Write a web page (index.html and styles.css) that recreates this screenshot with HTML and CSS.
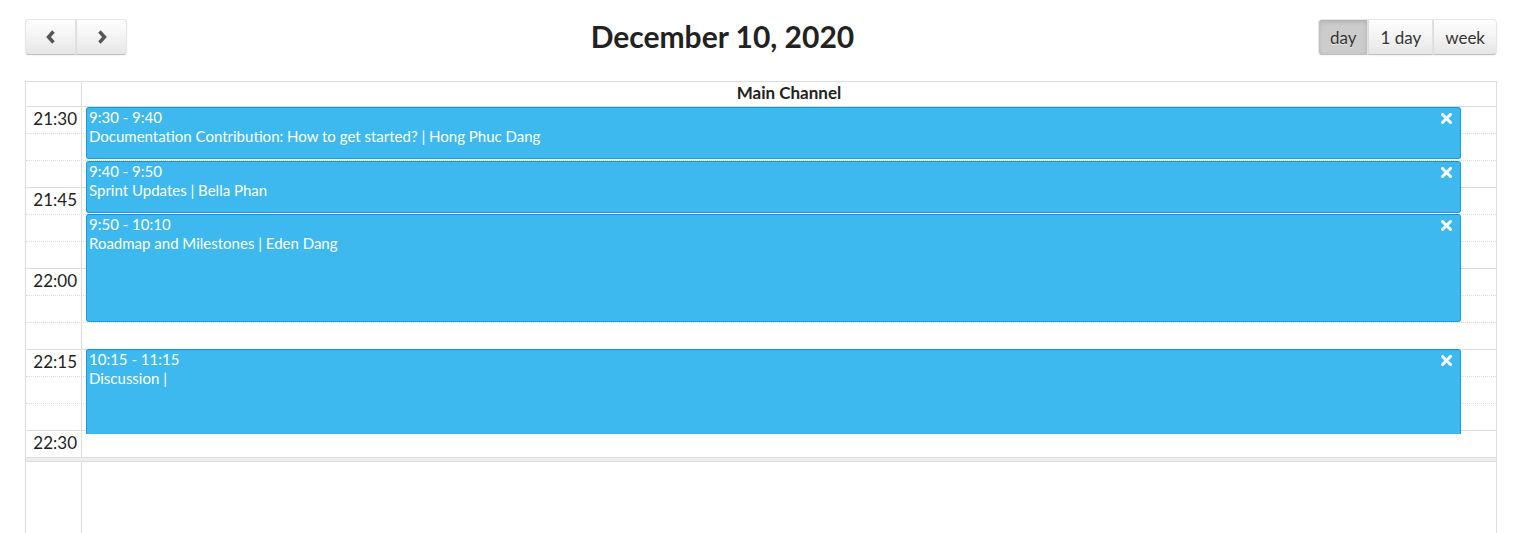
FILE: index.html
```html
<!DOCTYPE html>
<html lang="en">
<head>
<meta charset="utf-8">
<title>Calendar</title>
<link rel="stylesheet" href="styles.css">
</head>
<body>
<div class="cal">
  <div class="toolbar">
    <div class="btn-group">
      <button class="btn btn-first btn-nav" aria-label="prev">
        <svg width="12" height="14" viewBox="0 0 12 14"><polyline points="8.5,1.5 3.5,7 8.5,12.5" fill="none" stroke="#555" stroke-width="3.4"/></svg>
      </button>
      <button class="btn btn-last btn-nav" aria-label="next">
        <svg width="12" height="14" viewBox="0 0 12 14"><polyline points="3.5,1.5 8.5,7 3.5,12.5" fill="none" stroke="#555" stroke-width="3.4"/></svg>
      </button>
    </div>
    <div class="title-wrap"><h2 class="title">December 10, 2020</h2></div>
    <div class="btn-group">
      <button class="btn btn-first active">day</button>
      <button class="btn">1 day</button>
      <button class="btn btn-last">week</button>
    </div>
  </div>

  <div class="view">
    <div class="head">
      <div class="axis"></div>
      <div class="col-head">Main Channel</div>
    </div>
    <div class="slots">
      <div class="row major"><div class="axis"><span>21:30</span></div><div class="cell"></div></div>
      <div class="row minor"><div class="axis"></div><div class="cell"></div></div>
      <div class="row minor"><div class="axis"></div><div class="cell"></div></div>
      <div class="row major"><div class="axis"><span>21:45</span></div><div class="cell"></div></div>
      <div class="row minor"><div class="axis"></div><div class="cell"></div></div>
      <div class="row minor"><div class="axis"></div><div class="cell"></div></div>
      <div class="row major"><div class="axis"><span>22:00</span></div><div class="cell"></div></div>
      <div class="row minor"><div class="axis"></div><div class="cell"></div></div>
      <div class="row minor"><div class="axis"></div><div class="cell"></div></div>
      <div class="row major"><div class="axis"><span>22:15</span></div><div class="cell"></div></div>
      <div class="row minor"><div class="axis"></div><div class="cell"></div></div>
      <div class="row minor"><div class="axis"></div><div class="cell"></div></div>
      <div class="row major"><div class="axis"><span>22:30</span></div><div class="cell"></div></div>

      <div class="events">
        <div class="event" style="top:1px;height:52px">
          <div class="ev-time">9:30 - 9:40</div>
          <div class="ev-title">Documentation Contribution: How to get started? | Hong Phuc Dang</div>
          <svg class="ev-close" width="11" height="11" viewBox="0 0 11 11"><path d="M1.5 1.5 L9.5 9.5 M9.5 1.5 L1.5 9.5" stroke="#fff" stroke-width="3" stroke-linecap="square"/></svg>
        </div>
        <div class="event" style="top:55px;height:52px">
          <div class="ev-time">9:40 - 9:50</div>
          <div class="ev-title">Sprint Updates | Bella Phan</div>
          <svg class="ev-close" width="11" height="11" viewBox="0 0 11 11"><path d="M1.5 1.5 L9.5 9.5 M9.5 1.5 L1.5 9.5" stroke="#fff" stroke-width="3" stroke-linecap="square"/></svg>
        </div>
        <div class="event" style="top:108px;height:108px">
          <div class="ev-time">9:50 - 10:10</div>
          <div class="ev-title">Roadmap and Milestones | Eden Dang</div>
          <svg class="ev-close" width="11" height="11" viewBox="0 0 11 11"><path d="M1.5 1.5 L9.5 9.5 M9.5 1.5 L1.5 9.5" stroke="#fff" stroke-width="3" stroke-linecap="square"/></svg>
        </div>
        <div class="event" style="top:243px;height:160px">
          <div class="ev-time">10:15 - 11:15</div>
          <div class="ev-title">Discussion |</div>
          <svg class="ev-close" width="11" height="11" viewBox="0 0 11 11"><path d="M1.5 1.5 L9.5 9.5 M9.5 1.5 L1.5 9.5" stroke="#fff" stroke-width="3" stroke-linecap="square"/></svg>
        </div>
      </div>
    </div>
    <div class="divider"></div>
    <div class="rest">
      <div class="axis"></div>
      <div class="cell"></div>
    </div>
  </div>
</div>
</body>
</html>
```

FILE: styles.css
```css
* { box-sizing: border-box; }

html, body {
  margin: 0;
  padding: 0;
  background: #fff;
  overflow: hidden;
}

body {
  font-family: Lato, "Liberation Sans", sans-serif;
  font-size: 17px;
  color: #333;
}

.cal {
  margin: 0 25px;
  padding-top: 19px;
}

.toolbar {
  display: flex;
  align-items: center;
  height: 36px;
  margin-bottom: 26px;
}

.title-wrap {
  flex: 1;
  text-align: center;
}

.title {
  margin: 0 0 3px;
  font-size: 30px;
  font-weight: 700;
  color: #222;
  line-height: 34px;
}

.btn-group {
  display: flex;
  height: 36px;
}

.btn {
  font-family: inherit;
  font-size: 17px;
  height: 36px;
  margin: 0;
  padding: 0 11px;
  color: #333;
  background-color: #f5f5f5;
  background-image: linear-gradient(to bottom, #ffffff, #e6e6e6);
  border: 1px solid;
  border-color: #e6e6e6 #e6e6e6 #bfbfbf;
  border-left-width: 0;
  box-shadow: inset 0 1px 0 rgba(255,255,255,.2), 0 1px 2px rgba(0,0,0,.05);
  text-shadow: 0 1px 1px rgba(255,255,255,.75);
  display: flex;
  align-items: center;
  justify-content: center;
  cursor: pointer;
}

.btn-first {
  border-left-width: 1px;
  border-radius: 4px 0 0 4px;
}

.btn-last {
  border-radius: 0 4px 4px 0;
}

.btn-group .btn + .btn {
  border-left: 1px solid #dcdcdc;
}

.btn-nav {
  width: 51px;
}

.btn.active {
  background-color: #cccccc;
  background-image: none;
  box-shadow: inset 0 2px 4px rgba(0,0,0,.15), 0 1px 2px rgba(0,0,0,.05);
}

.view {
  border: 1px solid #ddd;
  border-bottom: none;
}

.head {
  display: grid;
  grid-template-columns: 56px 1fr;
  height: 24px;
}

.head .axis {
  border-right: 1px solid #ddd;
}

.col-head {
  text-align: center;
  font-weight: 700;
  font-size: 17px;
  color: #222;
  line-height: 22px;
}

.slots {
  position: relative;
}

.row {
  display: grid;
  grid-template-columns: 56px 1fr;
  height: 27px;
  border-top: 1px solid #ddd;
}

.row.minor {
  border-top: 1px dotted #ddd;
}

.axis {
  border-right: 1px solid #ddd;
  text-align: right;
  padding: 0 4px;
  white-space: nowrap;
}

.axis span {
  display: block;
  color: #222;
  padding-top: 1px;
}

.events {
  position: absolute;
  top: 0;
  left: 60px;
  right: 35px;
  height: 328px;
  overflow: hidden;
}

.event {
  position: absolute;
  left: 0;
  right: 0;
  background: #3db9ef;
  border: 1px solid #1a9be3;
  border-top-color: #0a95e0;
  border-radius: 3px;
  color: #fff;
  font-size: 15px;
  line-height: 19px;
  padding: 0 2px;
  overflow: hidden;
}

.ev-time,
.ev-title {
  white-space: nowrap;
}

.ev-close {
  position: absolute;
  top: 5px;
  right: 8px;
  display: block;
}

.divider {
  height: 5px;
  border-top: 1px solid #ddd;
  border-bottom: 1px solid #ddd;
  background: #eee;
}

.rest {
  display: grid;
  grid-template-columns: 56px 1fr;
  height: 120px;
}
```
